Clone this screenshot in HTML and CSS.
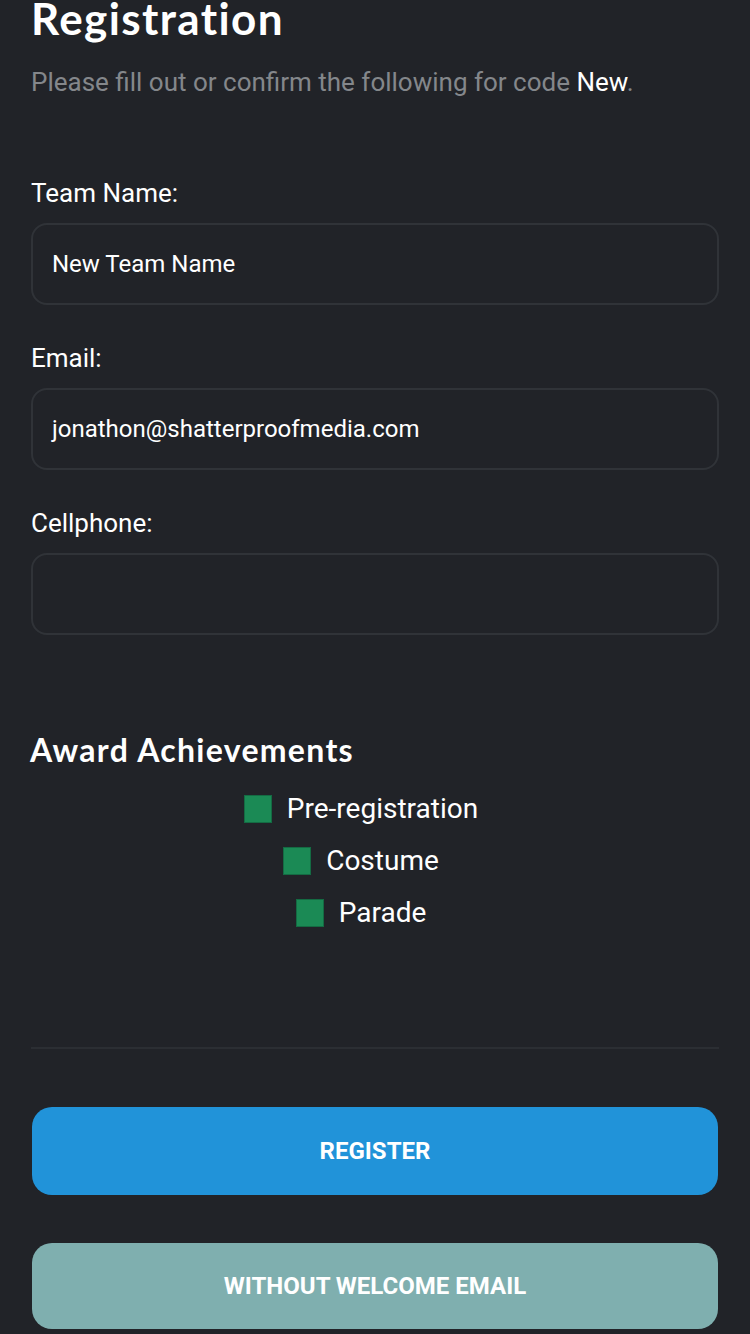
FILE: index.html
```html
<!DOCTYPE html>
<html>
<head>
<meta charset="utf-8">
<link rel="stylesheet" href="styles.css">
</head>
<body>
<main class="page">
  <h1 class="title">Registration</h1>
  <p class="subtitle">Please fill out or confirm the following for code <span class="code">New</span>.</p>

  <form class="form">
    <div class="field">
      <label class="label">Team Name:</label>
      <div class="input">New Team Name</div>
    </div>
    <div class="field">
      <label class="label">Email:</label>
      <div class="input">jonathon@shatterproofmedia.com</div>
    </div>
    <div class="field">
      <label class="label">Cellphone:</label>
      <div class="input"></div>
    </div>
  </form>

  <h2 class="section-title">Award Achievements</h2>
  <ul class="awards">
    <li class="award"><span class="box"></span><span class="award-text">Pre-registration</span></li>
    <li class="award"><span class="box"></span><span class="award-text">Costume</span></li>
    <li class="award"><span class="box"></span><span class="award-text">Parade</span></li>
  </ul>

  <hr class="divider">

  <div class="actions">
    <button class="btn btn-primary">REGISTER</button>
    <button class="btn btn-secondary">WITHOUT WELCOME EMAIL</button>
  </div>
</main>
</body>
</html>
```
FILE: styles.css
```css
html, body {
  margin: 0;
  padding: 0;
  background: #212328;
}
body {
  font-family: Roboto, "Liberation Sans", sans-serif;
  color: #ffffff;
}
.page {
  padding: 0 31px;
  display: flex;
  flex-direction: column;
}
.title {
  font-family: Lato, "Open Sans", sans-serif;
  font-weight: 700;
  font-size: 44px;
  line-height: 44px;
  margin: -4px 0 0 0;
  letter-spacing: 1.4px;
}
.subtitle {
  margin: 27px 0 0 0;
  font-size: 26px;
  line-height: 30px;
  color: #84878b;
}
.code {
  color: #ffffff;
}
.form {
  margin-top: 81px;
  display: flex;
  flex-direction: column;
  gap: 38px;
}
.field {
  display: flex;
  flex-direction: column;
  gap: 15px;
}
.label {
  font-size: 26px;
  line-height: 30px;
}
.input {
  box-sizing: border-box;
  height: 82px;
  border: 2px solid #303338;
  border-radius: 16px;
  padding: 0 19px;
  display: flex;
  align-items: center;
  font-size: 24px;
}
.section-title {
  font-family: Lato, "Open Sans", sans-serif;
  font-weight: 700;
  font-size: 32px;
  line-height: 36px;
  margin: 97px 0 0 -1px;
  letter-spacing: 1.3px;
}
.awards {
  list-style: none;
  margin: 23px 0 0 0;
  padding: 0;
  display: flex;
  flex-direction: column;
  align-items: center;
  gap: 16px;
}
.award {
  display: flex;
  align-items: center;
  gap: 15px;
  height: 36px;
  padding-right: 28px;
}
.box {
  width: 28px;
  height: 28px;
  box-sizing: border-box;
  background: #1b8a55;
  border: 1px solid #146b43;
}
.award-text {
  font-size: 28px;
  line-height: 36px;
}
.divider {
  margin: 116px 0 0 0;
  border: 0;
  border-top: 2px solid #2b2e33;
  height: 0;
}
.actions {
  margin-top: 58px;
  display: flex;
  flex-direction: column;
  gap: 48px;
  padding: 0 1px;
}
.btn {
  font-family: Roboto, "Liberation Sans", sans-serif;
  font-weight: 700;
  font-size: 24px;
  color: #ffffff;
  border: 0;
  border-radius: 20px;
  height: 88px;
  width: 100%;
}
.btn-primary {
  background: #2193d9;
}
.btn-secondary {
  background: #7fafaf;
  height: 86px;
}
```
